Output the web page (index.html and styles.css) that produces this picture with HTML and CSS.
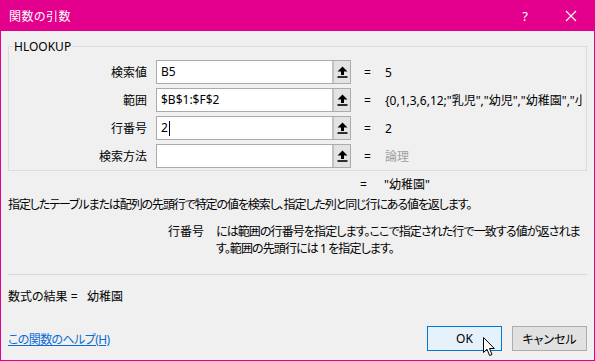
FILE: index.html
```html
<!DOCTYPE html>
<html lang="ja">
<head>
    <meta charset="UTF-8">
    <title>関数の引数</title>
    <link rel="stylesheet" href="styles.css">
</head>
<body>
    <div class="dialog">
        <div class="title-bar">
            <span class="title">関数の引数</span>
            <span class="title-btn help">?</span>
            <span class="title-btn close">
                <svg width="12" height="12" viewBox="0 0 12 12"><path d="M1 1 L11 11 M11 1 L1 11" stroke="#fff" stroke-width="1.2"/></svg>
            </span>
        </div>
        <div class="content">
            <fieldset class="group">
                <legend>HLOOKUP</legend>
                <div class="arg-row">
                    <label class="arg-label">検索値</label>
                    <div class="arg-input"><span class="arg-text">B5</span><span class="ref-btn"><svg width="11" height="12" viewBox="0 0 11 12"><path d="M5.5 0.5 L10.5 5.5 L7 5.5 L7 9 L4 9 L4 5.5 L0.5 5.5 Z" fill="#000"/><rect x="0.5" y="10.2" width="10" height="1.6" fill="#000"/></svg></span></div>
                    <span class="arg-eq">=</span>
                    <span class="arg-value">5</span>
                </div>
                <div class="arg-row">
                    <label class="arg-label">範囲</label>
                    <div class="arg-input"><span class="arg-text">$B$1:$F$2</span><span class="ref-btn"><svg width="11" height="12" viewBox="0 0 11 12"><path d="M5.5 0.5 L10.5 5.5 L7 5.5 L7 9 L4 9 L4 5.5 L0.5 5.5 Z" fill="#000"/><rect x="0.5" y="10.2" width="10" height="1.6" fill="#000"/></svg></span></div>
                    <span class="arg-eq">=</span>
                    <span class="arg-value">{0,1,3,6,12;"乳児","幼児","幼稚園","小学生","中学生"}</span>
                </div>
                <div class="arg-row">
                    <label class="arg-label">行番号</label>
                    <div class="arg-input"><span class="arg-text">2<span class="caret"></span></span><span class="ref-btn"><svg width="11" height="12" viewBox="0 0 11 12"><path d="M5.5 0.5 L10.5 5.5 L7 5.5 L7 9 L4 9 L4 5.5 L0.5 5.5 Z" fill="#000"/><rect x="0.5" y="10.2" width="10" height="1.6" fill="#000"/></svg></span></div>
                    <span class="arg-eq">=</span>
                    <span class="arg-value">2</span>
                </div>
                <div class="arg-row">
                    <label class="arg-label">検索方法</label>
                    <div class="arg-input"><span class="arg-text"></span><span class="ref-btn"><svg width="11" height="12" viewBox="0 0 11 12"><path d="M5.5 0.5 L10.5 5.5 L7 5.5 L7 9 L4 9 L4 5.5 L0.5 5.5 Z" fill="#000"/><rect x="0.5" y="10.2" width="10" height="1.6" fill="#000"/></svg></span></div>
                    <span class="arg-eq">=</span>
                    <span class="arg-value muted">論理</span>
                </div>
            </fieldset>

            <div class="result-row">
                <span class="arg-eq">=</span>
                <span class="arg-value">"幼稚園"</span>
            </div>
            <p class="func-desc">指定したテーブルまたは配列の先頭行で特定の値を検索し、指定した列と同じ行にある値を返します。</p>
            <div class="arg-desc">
                <span class="arg-desc-name">行番号</span>
                <span class="arg-desc-text">には範囲の行番号を指定します。ここで指定された行で一致する値が返されます。範囲の先頭行には 1 を指定します。</span>
            </div>

            <div class="separator"></div>
            <div class="formula-result">数式の結果 =&nbsp;&nbsp; 幼稚園</div>

            <div class="footer">
                <a class="help-link" href="#">この関数のヘルプ(H)</a>
                <button class="btn btn-default">OK</button>
                <button class="btn">キャンセル</button>
            </div>
        </div>
        <svg class="cursor" width="13" height="20" viewBox="0 0 13 20">
            <path d="M0.5 0.5 L0.5 15.5 L4 12.2 L6.6 18.5 L9 17.5 L6.5 11.5 L11.3 11.5 Z" fill="#fff" stroke="#000" stroke-width="1" stroke-linejoin="miter"/>
        </svg>
    </div>
</body>
</html>
```

FILE: styles.css
```css
body, html {
    margin: 0;
    padding: 0;
    background: #f0f0f0;
}
.dialog {
    position: relative;
    width: 595px;
    height: 361px;
    box-sizing: border-box;
    border: 1px solid #e3008c;
    border-top: none;
    background: #f0f0f0;
    display: flex;
    flex-direction: column;
    font-family: "Noto Sans", "Noto Sans CJK JP", sans-serif;
    font-size: 12px;
    font-feature-settings: "palt";
    color: #000;
}
.title-bar {
    height: 31px;
    margin: 0 -1px;
    background: #e3008c;
    color: #fff;
    display: flex;
    align-items: center;
    padding-left: 9px;
}
.title {
    flex: 1;
    font-size: 12px;
    letter-spacing: 0.5px;
}
.title-btn {
    width: 46px;
    display: flex;
    justify-content: center;
    font-size: 13px;
}
.close {
    margin-right: 1px;
}
.content {
    flex: 1;
    display: flex;
    flex-direction: column;
    padding: 0 7px;
}
.group {
    margin: 7px 0 0 0;
    padding: 5px 0 2px 0;
    border: 1px solid #dcdcdc;
    display: flex;
    flex-direction: column;
    gap: 4px;
    min-width: 0;
}
.group legend {
    margin-left: 4px;
    padding: 0 1px;
    font-family: "Noto Sans", sans-serif;
    font-size: 12px;
    line-height: 17px;
}
.arg-row {
    display: flex;
    align-items: center;
    height: 24px;
}
.arg-label {
    width: 138px;
    text-align: right;
    flex-shrink: 0;
}
.arg-input {
    margin-left: 9px;
    width: 195px;
    height: 24px;
    box-sizing: border-box;
    border: 1px solid #ababab;
    background: #fff;
    display: flex;
    flex-shrink: 0;
}
.arg-text {
    flex: 1;
    padding-left: 4px;
    line-height: 22px;
    display: flex;
    align-items: center;
}
.caret {
    display: inline-block;
    width: 1px;
    height: 15px;
    background: #000;
    margin-left: 1px;
}
.ref-btn {
    width: 16px;
    border-left: 2px solid #c2c2c2;
    background: #e3e3e3;
    display: flex;
    align-items: center;
    justify-content: center;
}
.arg-eq {
    margin-left: 13px;
    width: 21px;
    flex-shrink: 0;
}
.arg-value {
    white-space: nowrap;
    overflow: hidden;
    flex: 1;
    min-width: 0;
    margin-right: 4px;
}
.muted {
    color: #a0a0a0;
}
.result-row {
    display: flex;
    height: 17px;
    line-height: 17px;
    margin-top: 5px;
    padding-left: 352px;
}
.result-row .arg-eq {
    margin-left: 0;
    width: 24px;
}
.func-desc {
    margin: 3px 0 0 0;
    line-height: 17px;
    white-space: nowrap;
    letter-spacing: -1.1px;
}
.arg-desc {
    display: flex;
    margin-top: 10px;
    line-height: 17px;
}
.arg-desc-name {
    width: 196px;
    text-align: right;
    flex-shrink: 0;
}
.arg-desc-text {
    margin-left: 12px;
    width: 370px;
    letter-spacing: -0.9px;
}
.separator {
    margin-top: 17px;
    border-top: 1px solid #d9d9d9;
}
.formula-result {
    margin-top: 13px;
    line-height: 17px;
}
.footer {
    margin-top: auto;
    margin-bottom: 9px;
    display: flex;
    align-items: center;
    gap: 10px;
}
.help-link {
    flex: 1;
    color: #0b6cd6;
    text-decoration: underline;
    letter-spacing: -0.6px;
}
.btn {
    width: 75px;
    height: 25px;
    box-sizing: border-box;
    border: 1px solid #adadad;
    background: #e1e1e1;
    font-family: "Noto Sans", "Noto Sans CJK JP", sans-serif;
    font-size: 12px;
    font-feature-settings: "palt";
    color: #000;
    padding: 0;
}
.btn-default {
    border-color: #0078d7;
    background: #e5f1fb;
}
.cursor {
    position: absolute;
    left: 482px;
    top: 337px;
}
```
